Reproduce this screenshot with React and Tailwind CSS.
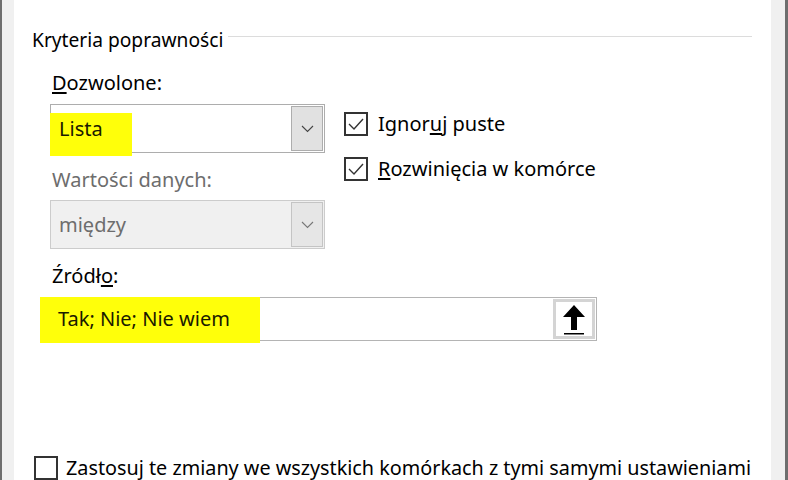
function Chevron({ color = '#444' }) {
  return (
    <svg width="13" height="8" viewBox="0 0 13 8" fill="none">
      <polyline points="1,1 6.5,6.5 12,1" stroke={color} strokeWidth="1.1" />
    </svg>
  )
}

function Checkbox({ checked }) {
  return (
    <div className="flex h-6 w-6 shrink-0 items-center justify-center border-2 border-[#333]">
      {checked && (
        <svg width="20" height="20" viewBox="0 0 20 20" fill="none">
          <polyline points="3,10 8,15 17,5" stroke="#333" strokeWidth="1.4" />
        </svg>
      )}
    </div>
  )
}

function Combo({ value, disabled, highlight }) {
  return (
    <div
      className={`relative flex h-[49px] w-[275px] items-stretch border p-[1px] ${
        disabled ? 'border-[#cccccc] bg-[#f0f0f0]' : 'border-[#adadad] bg-white'
      }`}
    >
      {highlight && (
        <span className="absolute top-[8px] -left-px h-[43px] w-[82px] bg-[#ffff0a]" />
      )}
      <span
        className={`relative flex flex-1 items-center pl-[7px] ${
          disabled ? 'text-[#6d6d6d]' : 'text-[#1a1a00]'
        }`}
      >
        {value}
      </span>
      <span
        className={`flex w-[32px] items-center justify-center border ${
          disabled ? 'border-[#c4c4c4] bg-[#e6e6e6]' : 'border-[#adadad] bg-[#e1e1e1]'
        }`}
      >
        <Chevron color={disabled ? '#777' : '#444'} />
      </span>
    </div>
  )
}

export default function App() {
  return (
    <div className="flex h-[480px] w-[788px] overflow-hidden border-r-[3px] border-l-2 border-[#6e6e6e] bg-[#f0f0f0] pr-[14px] pl-3 font-['Noto_Sans',sans-serif] text-[20px] leading-6 text-black">
      <div className="flex flex-1 flex-col bg-white pt-7">
        <div className="flex items-start pr-[19px] pl-[18px]">
          <span className="text-[19.2px]">Kryteria poprawności</span>
          <div className="mt-2 ml-[5px] h-px flex-1 bg-[#dcdcdc]" />
        </div>

        <div className="flex pl-9">
          <div className="flex flex-col">
            <span className="mt-[19px] pl-[2px]">
              <u className="underline-offset-2">D</u>ozwolone:
            </span>
            <div className="mt-[9px]">
              <Combo value="Lista" highlight />
            </div>
            <span className="mt-[15px] pl-[2px] text-[#6d6d6d]">Wartości danych:</span>
            <div className="mt-2">
              <Combo value="między" disabled />
            </div>
          </div>

          <div className="ml-[19px] flex flex-col gap-[21px] pt-[60px]">
            <label className="flex items-center gap-[10px]">
              <Checkbox checked />
              <span>
                Ignor<u className="underline-offset-2">u</u>j puste
              </span>
            </label>
            <label className="flex items-center gap-[10px]">
              <Checkbox checked />
              <span>
                <u className="underline-offset-2">R</u>ozwinięcia w komórce
              </span>
            </label>
          </div>
        </div>

        <div className="flex flex-col pl-9">
          <span className="mt-[15px] pl-[2px]">
            Źródł<u className="underline-offset-2">o</u>:
          </span>
          <div className="relative mt-[9px] flex h-[44px] w-[547px] items-stretch border border-[#b4b4b4] bg-white">
            <span className="absolute -top-px -left-[11px] h-[46px] w-[220px] bg-[#ffff0a]" />
            <span className="relative flex flex-1 items-center pl-[7px] text-[#1a1a00]">
              Tak; Nie; Nie wiem
            </span>
            <span className="m-px flex w-[42px] items-center justify-center border-[3px] border-[#d4d4d4] bg-white">
              <svg width="24" height="32" viewBox="0 0 24 32">
                <polygon points="12,2 23,14 15,14 15,27 9,27 9,14 1,14" fill="#000" />
                <rect x="2" y="30" width="20" height="1.5" fill="#000" />
              </svg>
            </span>
          </div>
        </div>

        <label className="mt-[115px] flex items-center gap-2 pl-5 text-[19.8px]">
          <Checkbox />
          <span>Zastosuj te zmiany we wszystkich komórkach z tymi samymi ustawieniami</span>
        </label>
      </div>
    </div>
  )
}
